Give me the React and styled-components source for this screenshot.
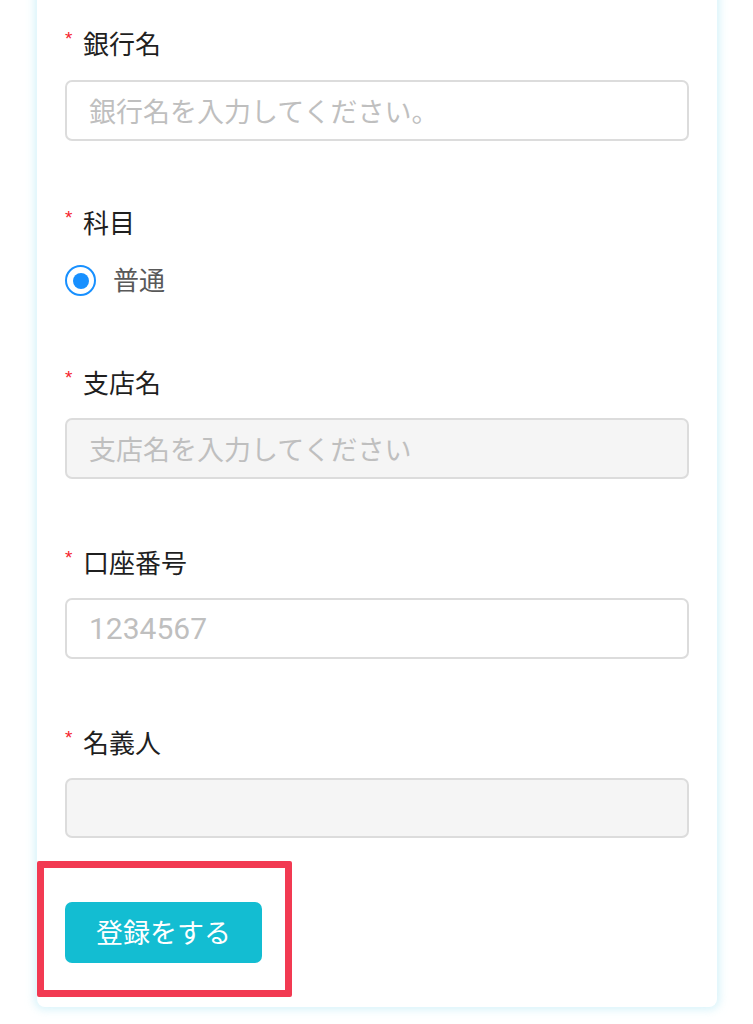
import React from 'react'
import styled, { createGlobalStyle } from 'styled-components'

const GlobalStyle = createGlobalStyle`
    html, body {
        margin: 0;
        padding: 0;
        background: #ffffff;
    }
    body {
        font-family: "Noto Sans CJK JP", "Noto Sans", sans-serif;
        overflow: hidden;
    }
`

const Page = styled.div`
    width: 753px;
    height: 1024px;
    overflow: hidden;
`

const Card = styled.div`
    width: 680px;
    margin: -20px 0 0 37px;
    padding: 45px 28px 44px;
    box-sizing: border-box;
    background: #ffffff;
    border-radius: 8px;
    box-shadow: 0 0 8px 3px rgba(186, 234, 246, 0.55);
    display: flex;
    flex-direction: column;
`

const Field = styled.div`
    display: flex;
    flex-direction: column;
    margin-bottom: ${p => p.$after}px;
`

const Label = styled.label`
    display: flex;
    align-items: center;
    height: 36px;
    font-size: 26px;
    line-height: 36px;
    color: #1f1f1f;
    margin-bottom: ${p => p.$gap}px;
`

const Required = styled.span`
    color: #f5222d;
    font-size: 19px;
    font-family: "Liberation Sans", sans-serif;
    width: 18px;
    position: relative;
    top: -4px;
`

const Input = styled.input`
    box-sizing: border-box;
    width: 624px;
    height: ${p => p.$h || 61}px;
    padding: 0 22px;
    border: 2px solid #dcdcdc;
    border-radius: 7px;
    background: ${p => (p.disabled ? '#f5f5f5' : '#ffffff')};
    font-family: ${p => (p.$numeric ? 'Roboto, "Noto Sans CJK JP", sans-serif' : '"Noto Sans CJK JP", sans-serif')};
    font-size: ${p => (p.$numeric ? 30 : 27)}px;
    color: #262626;
    outline: none;

    &::placeholder {
        color: #bfbfbf;
    }
`

const RadioRow = styled.label`
    display: flex;
    align-items: center;
    height: 31px;
    line-height: 31px;
    gap: 17px;
    font-size: 26px;
    color: #595959;
`

const RadioText = styled.span`
    position: relative;
    top: -2px;
`

const RadioOuter = styled.span`
    box-sizing: border-box;
    width: 31px;
    height: 31px;
    border: 2px solid #1890ff;
    border-radius: 50%;
    display: flex;
    align-items: center;
    justify-content: center;

    &::after {
        content: '';
        width: 16px;
        height: 16px;
        border-radius: 50%;
        background: #1890ff;
    }
`

const Actions = styled.div`
    position: relative;
    display: flex;
`

const Highlight = styled.div`
    position: absolute;
    left: -28px;
    top: -41px;
    width: 255px;
    height: 136px;
    box-sizing: border-box;
    border: 7px solid #f23a52;
    border-radius: 2px;
    pointer-events: none;
`

const SubmitButton = styled.button`
    width: 197px;
    height: 61px;
    border: none;
    border-radius: 7px;
    background: #13bdd2;
    color: #ffffff;
    font-family: "Noto Sans CJK JP", sans-serif;
    font-size: 27px;
    padding: 0 0 2px;
`

export default function App() {
    return (
        <Page>
            <GlobalStyle />
            <Card>
                <Field $after={63}>
                    <Label $gap={19}><Required>*</Required>銀行名</Label>
                    <Input placeholder="銀行名を入力してください。" />
                </Field>
                <Field $after={68}>
                    <Label $gap={25}><Required>*</Required>科目</Label>
                    <RadioRow><RadioOuter /><RadioText>普通</RadioText></RadioRow>
                </Field>
                <Field $after={65}>
                    <Label $gap={18}><Required>*</Required>支店名</Label>
                    <Input disabled placeholder="支店名を入力してください" />
                </Field>
                <Field $after={65}>
                    <Label $gap={18}><Required>*</Required>口座番号</Label>
                    <Input $numeric placeholder="1234567" />
                </Field>
                <Field $after={64}>
                    <Label $gap={18}><Required>*</Required>名義人</Label>
                    <Input disabled $h={60} />
                </Field>
                <Actions>
                    <SubmitButton>登録をする</SubmitButton>
                    <Highlight />
                </Actions>
            </Card>
        </Page>
    )
}
